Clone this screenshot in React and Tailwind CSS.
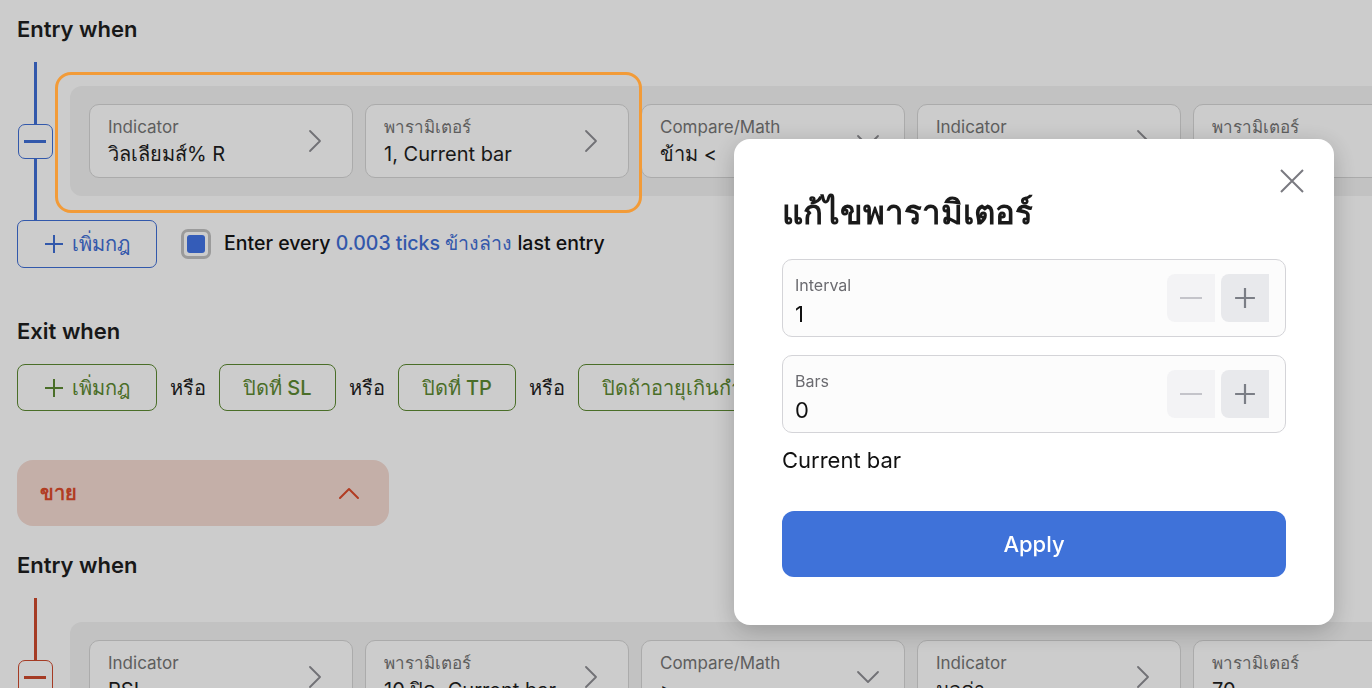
// Tela de regras de estratégia com o modal "แก้ไขพารามิเตอร์" aberto por cima.

const FONT = { fontFamily: 'Inter, Roboto, "Noto Sans", "DejaVu Sans", sans-serif' };

function ChevronRightThin() {
  return (
    <svg width="14" height="24" viewBox="0 0 14 24" fill="none" className="shrink-0">
      <polyline points="2,2 12,12 2,22" stroke="#8e8e93" strokeWidth="1.8" strokeLinecap="round" strokeLinejoin="round" />
    </svg>
  );
}

function ChevronDownThin() {
  return (
    <svg width="24" height="14" viewBox="0 0 24 14" fill="none" className="shrink-0">
      <polyline points="2,2 12,12 22,2" stroke="#8e8e93" strokeWidth="1.8" strokeLinecap="round" strokeLinejoin="round" />
    </svg>
  );
}

function PlusIcon({ color, size = 20, width = 2 }) {
  return (
    <svg width={size} height={size} viewBox="0 0 20 20" fill="none" className="shrink-0">
      <path d="M10 1v18M1 10h18" stroke={color} strokeWidth={width} />
    </svg>
  );
}

function Card({ label, value, icon }) {
  return (
    <div
      className={
        icon === "down"
          ? "flex h-[74px] w-[264px] shrink-0 items-center justify-between rounded-[10px] border border-[#d6d6d6] bg-white pl-[18px] pr-[24px]"
          : "flex h-[74px] w-[264px] shrink-0 items-center justify-between rounded-[10px] border border-[#d6d6d6] bg-white pl-[18px] pr-[30px]"
      }
    >
      <div className="flex flex-col gap-[3px]">
        <span className="text-[17px] leading-[22px] text-[#767676]">{label}</span>
        <span className="text-[20px] leading-[26px] text-[#1e1e1e]">{value}</span>
      </div>
      {icon === "down" ? <ChevronDownThin /> : <ChevronRightThin />}
    </div>
  );
}

function RuleRow({ tone, cards, highlight }) {
  const red = tone === "red";
  return (
    <div className="mt-[18px] flex">
      <div className="relative flex w-[36px] shrink-0 items-center justify-center">
        <div
          className={
            red
              ? "absolute inset-y-0 left-[17px] w-[3px] bg-[#cf4a2e]"
              : "absolute inset-y-0 left-[17px] w-[3px] bg-[#3f6ed6]"
          }
        />
        <button
          className={
            red
              ? "relative flex h-[35px] w-[35px] items-center justify-center rounded-[7px] border border-[#cf4a2e] bg-white"
              : "relative flex h-[35px] w-[35px] items-center justify-center rounded-[7px] border border-[#3f6ed6] bg-white"
          }
        >
          <span className={red ? "h-[3px] w-[22px] bg-[#cf4a2e]" : "h-[3px] w-[22px] bg-[#3f6ed6]"} />
        </button>
      </div>

      <div className="relative my-[24px] ml-[17px] flex w-max shrink-0 gap-[12px] rounded-[12px] bg-[#f3f3f3] px-[19px] py-[18px]">
        {cards.map((c, i) => (
          <Card key={i} {...c} />
        ))}
        {highlight && (
          <div className="pointer-events-none absolute -left-[15px] -top-[14px] z-20 h-[141px] w-[587px] rounded-[16px] border-[3px] border-[#f29b38]" />
        )}
      </div>
    </div>
  );
}

function Stepper({ label, value }) {
  return (
    <div className="flex h-[78px] items-center justify-between rounded-[10px] border border-[#d4d4d8] bg-[#fcfcfc] pl-[12px] pr-[16px]">
      <div className="flex flex-col self-start pt-[15px]">
        <span className="text-[16px] leading-[20px] text-[#6b6b70]">{label}</span>
        <span className="mt-[5px] text-[22px] leading-[28px] text-[#111]">{value}</span>
      </div>
      <div className="flex gap-[6px]">
        <button className="flex h-[48px] w-[48px] items-center justify-center rounded-l-[8px] bg-[#f3f3f5]">
          <svg width="22" height="22" viewBox="0 0 22 22" fill="none">
            <path d="M0 11h22" stroke="#c4c4ca" strokeWidth="2" />
          </svg>
        </button>
        <button className="flex h-[48px] w-[48px] items-center justify-center rounded-l-[8px] bg-[#e8e9ec]">
          <PlusIcon color="#7b7e86" size={22} width={2} />
        </button>
      </div>
    </div>
  );
}

const buyCards = [
  { label: "Indicator", value: "วิลเลียมส์% R" },
  { label: "พารามิเตอร์", value: "1, Current bar" },
  { label: "Compare/Math", value: "ข้าม <", icon: "down" },
  { label: "Indicator", value: "มูลค่า" },
  { label: "พารามิเตอร์", value: "-80" },
];

const sellCards = [
  { label: "Indicator", value: "RSI" },
  { label: "พารามิเตอร์", value: "10 ปิด, Current bar" },
  { label: "Compare/Math", value: ">", icon: "down" },
  { label: "Indicator", value: "มูลค่า" },
  { label: "พารามิเตอร์", value: "70" },
];

function ExitChip({ children }) {
  return (
    <button className="flex h-[47px] shrink-0 items-center rounded-[8px] border border-[#5d8a32] px-[23px] text-[20px] font-medium text-[#5d8a32]">
      {children}
    </button>
  );
}

export default function App() {
  return (
    <div style={FONT} className="h-screen w-screen overflow-hidden bg-white">
      <div className="px-[17px]">
        <h2 className="mt-[14px] text-[22px] font-semibold leading-[30px] text-[#1f1f1f]">Entry when</h2>
        <RuleRow tone="blue" cards={buyCards} highlight />

        <div className="flex items-center gap-[24px]">
          <button className="flex h-[48px] w-[140px] items-center justify-center gap-[8px] rounded-[7px] border border-[#3f6ed6] text-[20px] font-medium text-[#3f6ed6]">
            <PlusIcon color="#3f6ed6" />
            เพิ่มกฎ
          </button>
          <div className="flex items-center gap-[13px]">
            <span className="flex h-[30px] w-[30px] items-center justify-center rounded-[7px] border-[3px] border-[#c2c2c2] bg-white">
              <span className="h-[18px] w-[18px] rounded-[3px] bg-[#4173e6]" />
            </span>
            <span className="text-[19.5px] font-medium text-[#141414]">
              Enter every <span className="text-[#3f6ed6]">0.003 ticks ข้างล่าง</span> last entry
            </span>
          </div>
        </div>

        <h2 className="mt-[48px] text-[22px] font-semibold leading-[30px] text-[#1f1f1f]">Exit when</h2>
        <div className="mt-[18px] flex items-center gap-[13px] whitespace-nowrap">
          <button className="flex h-[47px] w-[140px] shrink-0 items-center justify-center gap-[8px] rounded-[8px] border border-[#5d8a32] text-[20px] font-medium text-[#5d8a32]">
            <PlusIcon color="#5d8a32" />
            เพิ่มกฎ
          </button>
          <span className="text-[20px] text-[#1e1e1e]">หรือ</span>
          <ExitChip>ปิดที่ SL</ExitChip>
          <span className="text-[20px] text-[#1e1e1e]">หรือ</span>
          <ExitChip>ปิดที่ TP</ExitChip>
          <span className="text-[20px] text-[#1e1e1e]">หรือ</span>
          <ExitChip>ปิดถ้าอายุเกินกำหนด</ExitChip>
        </div>

        <div className="mt-[49px] flex h-[66px] w-[372px] items-center justify-between rounded-[16px] bg-[#f5dbd3] pl-[23px] pr-[29px]">
          <span className="text-[20px] font-bold text-[#de4b2b]">ขาย</span>
          <svg width="22" height="13" viewBox="0 0 22 13" fill="none">
            <polyline points="2,11 11,2 20,11" stroke="#de4b2b" strokeWidth="2" strokeLinecap="round" strokeLinejoin="round" />
          </svg>
        </div>

        <h2 className="mt-[24px] text-[22px] font-semibold leading-[30px] text-[#1f1f1f]">Entry when</h2>
        <RuleRow tone="red" cards={sellCards} />
      </div>

      {/* fundo escurecido do modal */}
      <div className="fixed inset-0 z-10 bg-black/20" />

      <div className="fixed left-[734px] top-[139px] z-30 w-[600px] rounded-[16px] bg-white px-[48px] pb-[48px] pt-[53px] shadow-[0_6px_24px_rgba(0,0,0,0.22)]">
        <button className="absolute right-[30px] top-[30px]">
          <svg width="24" height="24" viewBox="0 0 24 24" fill="none">
            <path d="M1 1l22 22M23 1L1 23" stroke="#7a7a80" strokeWidth="2" />
          </svg>
        </button>
        <h2 className="text-[33px] font-bold leading-[40px] text-[#1a1a1a]">แก้ไขพารามิเตอร์</h2>
        <div className="mt-[27px]">
          <Stepper label="Interval" value="1" />
        </div>
        <div className="mt-[18px]">
          <Stepper label="Bars" value="0" />
        </div>
        <p className="mt-[13px] text-[22px] leading-[28px] text-[#111]">Current bar</p>
        <button className="mt-[37px] flex h-[66px] w-full items-center justify-center rounded-[12px] bg-[#3f72d9] text-[22px] font-medium text-white">
          Apply
        </button>
      </div>
    </div>
  );
}
